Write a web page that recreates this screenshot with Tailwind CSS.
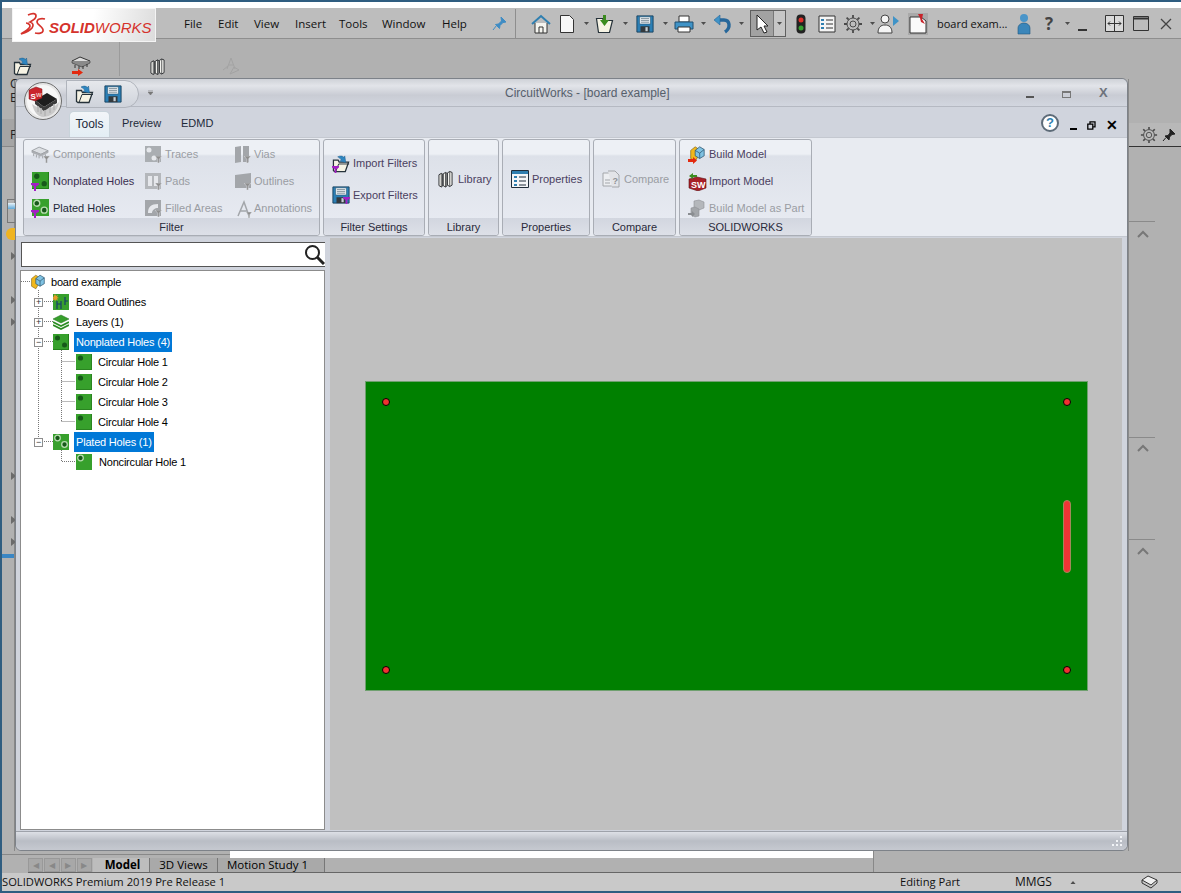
<!DOCTYPE html>
<html lang="en">
<head>
  <meta charset="UTF-8">
  <script src="https://cdn.jsdelivr.net/npm/@tailwindcss/browser@4"></script>
  <title>CircuitWorks - SOLIDWORKS</title>
</head>
<body class="bg-[#b1b1b1] font-['Open_Sans',sans-serif] text-black overflow-hidden">

  <!-- shared icons -->
  <svg class="hidden">
    <defs>
      <symbol id="open" viewBox="0 0 20 20">
        <path d="M1.500 6.500h5l1 2h7l-1 0 4 0-3.500 10h-11l-1.500-1z" fill="#f6f3e4" stroke="#26323a" stroke-width="1.300"/>
        <path d="M4 18.500l3-8h11" fill="none" stroke="#26323a" stroke-width="1"/>
        <path d="M6 3c3-1.500 5-1 6.500.5l1-1.500 1 7-6.500-1.500 1.800-1c-.8-1.500-2-2.500-3.800-3.500z" fill="#2f86c0" stroke="#1d5c88" stroke-width=".5"/>
      </symbol>
      <symbol id="save" viewBox="0 0 20 20">
        <path d="M1 1h18v18H1z" fill="#2b7fb5" stroke="#16405c"/>
        <path d="M4 2h12v8H4z" fill="#eef3f6" stroke="#26506c" stroke-width=".6"/>
        <path d="M5.500 4h9M5.500 6h9M5.500 8h9" stroke="#5a6e7a" stroke-width=".8"/>
        <path d="M5 12.500h10V19H5z" fill="#33393d"/>
        <path d="M10.500 13.500h2.500v4.500h-2.500z" fill="#c4ced4"/>
      </symbol>
      <symbol id="funnel" viewBox="0 0 8 8">
        <path d="M0 0h8v1.800L5 3.500V8H3V3.500L0 1.800z" fill="#a21fc4"/>
      </symbol>
      <symbol id="gfunnel" viewBox="0 0 8 8">
        <path d="M0 0h8L5 3.500V8H3V3.500z" fill="#8e8e8e" stroke="#e8ebf2" stroke-width=".5"/>
      </symbol>
      <symbol id="holes" viewBox="0 0 16 16">
        <rect width="16" height="16" fill="#37a02c"/>
        <path d="M0 15.500h16M15.500 0v16" stroke="#238019"/>
        <circle cx="4.500" cy="4" r="2.500" fill="#17591a"/>
        <circle cx="11.500" cy="11" r="2.500" fill="#17591a"/>
      </symbol>
      <symbol id="plated" viewBox="0 0 16 16">
        <rect width="16" height="16" fill="#37a02c"/>
        <circle cx="4.500" cy="4" r="2.800" fill="#17591a" stroke="#b6dcae" stroke-width="1.300"/>
        <circle cx="11.500" cy="10.500" r="2.800" fill="#17591a" stroke="#b6dcae" stroke-width="1.300"/>
      </symbol>
      <symbol id="hole" viewBox="0 0 16 16">
        <rect width="16" height="16" fill="#37a02c"/>
        <path d="M0 15.500h16M15.500 0v16" stroke="#2a8420"/>
        <circle cx="4.500" cy="4" r="2.600" fill="#17591a"/>
      </symbol>
      <symbol id="phole" viewBox="0 0 16 16">
        <rect width="16" height="16" fill="#37a02c"/>
        <circle cx="4.500" cy="4" r="2.800" fill="#17591a" stroke="#b6dcae" stroke-width="1.300"/>
      </symbol>
      <symbol id="chipg" viewBox="0 0 20 16">
        <path d="M1 6l8-4 10 4-8 4z" fill="#dcdfe3" stroke="#9a9da2"/>
        <path d="M1 6v2l10 4 8-4V6l-8 4z" fill="#aeb1b5" stroke="#9a9da2" stroke-width=".6"/>
        <path d="M3 9v3M6 10.500v3M9 11.500v3M13 11.500v3M16 10v3" stroke="#9a9da2"/>
      </symbol>
      <symbol id="book" viewBox="0 0 16 18">
        <path d="M1 4.500l2.500-1.500 1.500.8V16.500l-1.500 1L1 16zM5.500 3.500L8 2l1.500.8v13.700l-1.500 1-2.500-1.500zM10 2.500L12.500 1l2.500 1V15.500l-2.500 1.500L10 15.500z" fill="#f2f2ee" stroke="#2b2d30" stroke-width="1"/>
        <path d="M3.500 3v14.500M8 2v15.500M12.500 1v16" stroke="#2b2d30" stroke-width=".8"/>
      </symbol>
      <symbol id="gear" viewBox="0 0 20 20">
        <circle cx="10" cy="10" r="6" fill="none" stroke="#4a4a4a" stroke-width="1"/>
        <circle cx="10" cy="10" r="3" fill="none" stroke="#4a4a4a" stroke-width="1"/>
        <path d="M10 1v3M10 16v3M1 10h3M16 10h3M3.600 3.600l2.100 2.100M14.300 14.300l2.100 2.100M3.600 16.400l2.100-2.100M14.300 5.700l2.100-2.100" stroke="#4a4a4a" stroke-width="1.800"/>
      </symbol>
      <symbol id="cube" viewBox="0 0 20 20">
        <path d="M3 6l5-4 3 2v9l-3 5-5-3z" fill="#f1b81c" stroke="#7d5f10" stroke-width=".7"/>
        <path d="M8 6l5-4 5 3v7l-5 3-5-3z" fill="#7fc2e2" stroke="#28506a" stroke-width=".8"/>
        <path d="M8 6l5 3 5-4M13 9v6" fill="none" stroke="#28506a" stroke-width=".8"/>
      </symbol>
      <symbol id="caret" viewBox="0 0 5 3">
        <path d="M0 0h5L2.500 3z" fill="#4d4d4d"/>
      </symbol>
      <symbol id="chevron" viewBox="0 0 12 8">
        <path d="M1 7l5-5 5 5" fill="none" stroke="#777" stroke-width="2"/>
      </symbol>
      <symbol id="tri" viewBox="0 0 5 8">
        <path d="M0 0l5 4-5 4z" fill="#6b6b6b"/>
      </symbol>
    </defs>
  </svg>

  <div class="relative w-[1181px] h-[893px] flex flex-col border-l-2 border-t-2 border-[#2f5d80]">

    <!-- SOLIDWORKS menu bar -->
    <div class="h-[6px] bg-white"></div>
    <div class="h-[31px] bg-[#bdbdbd] border-b border-[#8e8e8e] flex items-center pt-[1px] text-[11.5px] leading-none text-[#111]">
      <div class="ml-[10px] w-[144px] h-[34px] -mt-[1px] self-start bg-[linear-gradient(100deg,#ffffff_55%,#dcdcdc)] border border-[#f4f4f4] flex items-center relative z-10">
        <svg class="ml-[6px] w-[28px] h-[27px]" viewBox="0 0 26 27"><path d="M8 3c5-2.500 8-1.500 8 1 0 3-4 5-6 6 3 1 4 3 2 6-2 2.500-6 4.500-11 6 4-3 9-5 9-8 0-2-3-3-4-3M25 7c-4-1-8 0-8 3 0 3 7 5 6 9-.5 2-4 3-8 2" fill="none" stroke="#d5332c" stroke-width="1.700"/></svg>
        <span class="ml-[2px] mt-[5px] text-[15px] italic font-['Liberation_Sans',sans-serif] text-[#d5332c]"><b>SOLID</b>WORKS</span>
      </div>
      <div class="ml-[28px] flex pt-[1px]">
        <span class="w-[34px]">File</span>
        <span class="w-[36px]">Edit</span>
        <span class="w-[41px]">View</span>
        <span class="w-[44px]">Insert</span>
        <span class="w-[43px]">Tools</span>
        <span class="w-[60px]">Window</span>
        <span class="w-[50px]">Help</span>
      </div>
      <svg class="w-[15px] h-[15px]" viewBox="0 0 15 15"><path d="M9 1l5 5-3 .5-3 3-.5 3L3.500 8.500l3-.5 3-3zM4.500 9.500L1 14" fill="#3e8cc4" stroke="#3e8cc4"/></svg>
      <div class="ml-[8px] w-[1px] h-[30px] bg-[#8e8e8e]"></div>
      <div class="ml-[15px] flex items-center">
        <svg class="w-[20px] h-[20px]" viewBox="0 0 20 20"><path d="M1 10l9-8 9 8" fill="none" stroke="#2f7fb0" stroke-width="2"/><path d="M4 9v10h12V9" fill="#f4f4ef" stroke="#333"/><path d="M8 19v-6h4v6" fill="none" stroke="#333"/></svg>
        <svg class="ml-[8px] w-[16px] h-[20px]" viewBox="0 0 16 20"><path d="M1.500 1.500h9l4 4v13h-13z" fill="#f7f7f7" stroke="#333"/></svg>
        <svg class="ml-[9px] w-[5px] h-[3px]"><use href="#caret"/></svg>
        <svg class="ml-[6px] w-[20px] h-[20px]" viewBox="0 0 20 20"><path d="M1.500 4.500h6l1 2h9l-3 12h-11z" fill="#f6f3e4" stroke="#26323a" stroke-width="1.200"/><path d="M8 1h3v5h3l-4.500 6L5 6h3z" fill="#3b8b1f"/></svg>
        <svg class="ml-[8px] w-[5px] h-[3px]"><use href="#caret"/></svg>
        <svg class="ml-[8px] w-[18px] h-[20px]"><use href="#save"/></svg>
        <svg class="ml-[9px] w-[5px] h-[3px]"><use href="#caret"/></svg>
        <svg class="ml-[6px] w-[20px] h-[18px]" viewBox="0 0 20 18"><path d="M5 1h10v6H5z" fill="#fff" stroke="#333"/><path d="M1 7h18v7H1z" fill="#3f93c7" stroke="#1f4f70"/><path d="M4 12h12v5H4z" fill="#fff" stroke="#333"/></svg>
        <svg class="ml-[7px] w-[5px] h-[3px]"><use href="#caret"/></svg>
        <svg class="ml-[7px] w-[20px] h-[20px]" viewBox="0 0 20 20"><path d="M5 6h6c6 0 7 8 1 12" fill="none" stroke="#27679a" stroke-width="3.400"/><path d="M1 6l6-5v10z" fill="#3f93c7" stroke="#27679a" stroke-width=".6"/></svg>
        <svg class="ml-[6px] w-[5px] h-[3px]"><use href="#caret"/></svg>
        <div class="ml-[6px] h-[27px] w-[36px] flex border border-[#5f5f5f] bg-[#a2a2a2]">
          <div class="w-[22px] flex items-center justify-center">
            <svg class="w-[13px] h-[20px]" viewBox="0 0 13 20"><path d="M1 1v15l4-3 3 6 3-1-3-6h4z" fill="#fff" stroke="#222"/></svg>
          </div>
          <div class="flex-1 bg-[#c6c6c6] border-l border-[#777] flex items-center justify-center">
            <svg class="w-[5px] h-[3px]"><use href="#caret"/></svg>
          </div>
        </div>
        <svg class="ml-[10px] w-[10px] h-[20px]" viewBox="0 0 10 20"><rect x=".5" y=".5" width="9" height="19" rx="4" fill="#222"/><circle cx="5" cy="6" r="2.500" fill="#e0302a"/><circle cx="5" cy="14" r="2.500" fill="#36a030"/></svg>
        <svg class="ml-[12px] w-[18px] h-[18px]" viewBox="0 0 18 18"><path d="M1 1h16v16H1z" fill="#f5f5f5" stroke="#333"/><path d="M3 4h3v2H3zM3 8h3v2H3zM3 12h3v2H3z" fill="#2f7fb0"/><path d="M8 5h7M8 9h7M8 13h7" stroke="#333"/></svg>
        <svg class="ml-[7px] w-[20px] h-[20px]"><use href="#gear"/></svg>
        <svg class="ml-[7px] w-[5px] h-[3px]"><use href="#caret"/></svg>
        <svg class="ml-[2px] w-[23px] h-[20px]" viewBox="0 0 23 20"><circle cx="8" cy="5" r="4" fill="#f4f4f4" stroke="#444"/><path d="M1 19c0-6 3-8 7-8s7 2 7 8z" fill="#f4f4f4" stroke="#444"/><path d="M16 2l6 5-6 5z" fill="#3f93c7"/></svg>
        <div class="ml-[8px] w-[20px] h-[22px] bg-[#a9a9a9] flex items-center justify-center">
          <svg class="w-[18px] h-[20px]" viewBox="0 0 18 20"><path d="M1 3h11l5 4v12H1z" fill="#fafafa" stroke="#333"/><path d="M9 0h5l-1 5 3 5-4-2-1-4z" fill="#c8232a"/></svg>
        </div>
        <span class="ml-[9px] w-[80px] text-[11px] whitespace-nowrap">board exam...</span>
        <svg class="w-[14px] h-[22px]" viewBox="0 0 14 22"><circle cx="7" cy="5" r="4" fill="#4a95c9"/><path d="M1 21v-6c0-3 3-5 6-5s6 2 6 5v6z" fill="#3b86ba" stroke="#24597f" stroke-width=".6"/></svg>
        <span class="ml-[11px] w-[14px] text-[17px] font-bold text-[#444] text-center">?</span>
        <svg class="ml-[9px] w-[5px] h-[3px]"><use href="#caret"/></svg>
        <svg class="ml-[6px] w-[16px] h-[18px]" viewBox="0 0 16 18"><path d="M2 15h9" stroke="#333" stroke-width="2"/></svg>
        <svg class="ml-[13px] w-[19px] h-[17px]" viewBox="0 0 19 17"><path d="M.5.500h18v16H.5zM9.500 1v15" fill="#dadada" stroke="#333"/><path d="M3 8.500h13M5 6.500l-2 2 2 2M14 6.500l2 2-2 2" fill="none" stroke="#333"/></svg>
        <svg class="ml-[9px] w-[16px] h-[15px]" viewBox="0 0 16 15"><path d="M.5.500h15v14H.5z" fill="none" stroke="#333"/><path d="M1 2.500h14" stroke="#333" stroke-width="2"/></svg>
        <svg class="ml-[11px] w-[12px] h-[12px]" viewBox="0 0 12 12"><path d="M1 1l10 10M11 1L1 11" stroke="#444" stroke-width="1.300"/></svg>
      </div>
    </div>

    <!-- command manager, mostly behind the floating window -->
    <div class="h-[40px] flex items-end pb-[3px] relative">
      <svg class="ml-[11px] w-[20px] h-[20px]"><use href="#open"/></svg>
      <svg class="ml-[38px] w-[20px] h-[20px]" viewBox="0 0 20 20"><path d="M1 5l8-4 10 4-8 4z" fill="#dcdcdc" stroke="#333"/><path d="M1 5v2l10 4 8-4V5" fill="#8a8a8a" stroke="#333" stroke-width=".6"/><path d="M4 9v3M8 10v3M12 10v3M16 8v3" stroke="#333"/><path d="M1 15h6v-2l5 3.500L7 20v-2H1z" fill="#e2290f"/></svg>
      <div class="ml-[28px] w-[1px] h-[34px] bg-[#9b9b9b]"></div>
      <svg class="ml-[30px] w-[15px] h-[19px]"><use href="#book"/></svg>
      <svg class="ml-[56px] w-[20px] h-[20px]" viewBox="0 0 20 20"><path d="M6 13L10 2l4 11M8 9h4M2 14l5-4M18 14l-5-3-4 7z" fill="none" stroke="#a3a3a3"/></svg>
    </div>

    <!-- main area: left feature tree strip, space, right task pane strip -->
    <div class="flex-1 flex">
      <div class="w-[13px] bg-[#b1b1b1] border-r border-[#888] text-[12px] leading-none text-[#222] relative">
        <span class="absolute left-[8px] top-[-1px]">C</span>
        <span class="absolute left-[8px] top-[13px]">E</span>
        <div class="absolute left-0 right-0 top-[40px] h-[28px] bg-[#a5a5a5] border-b border-[#888] pl-[8px] pt-[10px]">F</div>
        <div class="absolute left-[5px] top-[120px] w-[10px] h-[24px] border border-[#777]">
          <div class="mt-[3px] h-[6px] bg-[linear-gradient(#e8f2f8,#5fa8d8)]"></div>
        </div>
        <div class="absolute left-[4px] top-[149px] w-[10px] h-[12px] bg-[#f0b420] rounded-l-full"></div>
        <svg class="absolute left-[9px] top-[173px] w-[5px] h-[8px]"><use href="#tri"/></svg>
        <svg class="absolute left-[9px] top-[217px] w-[5px] h-[8px]"><use href="#tri"/></svg>
        <svg class="absolute left-[9px] top-[239px] w-[5px] h-[8px]"><use href="#tri"/></svg>
        <svg class="absolute left-[9px] top-[393px] w-[5px] h-[8px]"><use href="#tri"/></svg>
        <svg class="absolute left-[9px] top-[437px] w-[5px] h-[8px]"><use href="#tri"/></svg>
        <svg class="absolute left-[9px] top-[459px] w-[5px] h-[8px]"><use href="#tri"/></svg>
        <div class="absolute left-0 right-0 top-[475px] h-[4px] bg-[#3a86c4]"></div>
      </div>
      <div class="flex-1"></div>
      <div class="w-[53px] border-l border-[#8a8a8a] relative">
        <div class="mt-[44px] h-[24px] bg-[#b8b8b8] border-b border-[#333] flex items-center gap-[4px] pl-[11px]">
          <svg class="w-[18px] h-[18px]"><use href="#gear"/></svg>
          <svg class="w-[14px] h-[14px]" viewBox="0 0 14 14"><path d="M8 1l5 5-3 .5-2.500 2.500-.5 3L3 8l3-.5L8 5zM4 9.500L1 13" fill="#222" stroke="#222"/></svg>
        </div>
        <div class="mt-[74px] w-[26px] border-t border-[#8a8a8a]"></div>
        <svg class="mt-[8px] ml-[8px] w-[12px] h-[8px]"><use href="#chevron"/></svg>
        <div class="mt-[199px] w-[26px] border-t border-[#8a8a8a]"></div>
        <svg class="mt-[6px] ml-[8px] w-[12px] h-[8px]"><use href="#chevron"/></svg>
        <div class="mt-[87px] w-[26px] border-t border-[#8a8a8a]"></div>
        <svg class="mt-[7px] ml-[8px] w-[12px] h-[8px]"><use href="#chevron"/></svg>
      </div>
    </div>

    <!-- sheet tabs -->
    <div class="h-[22px] flex items-stretch text-[11.5px] leading-none relative">
      <div class="w-[228px] mt-[3px] border-t border-[#888]"></div>
      <div class="w-[643px] h-[7px] bg-white"></div>
      <div class="flex-1 border-l border-[#888]"></div>
      <div class="absolute left-[26px] right-0 top-[7px] h-[15px] flex items-stretch border-b border-[#666]">
        <div class="w-[64px] flex gap-[1px] items-stretch">
          <div class="flex-1 bg-[#a8a8a8] border border-[#999] text-[#888] text-center text-[8px] pt-[2px]">&#9664;</div>
          <div class="flex-1 bg-[#a8a8a8] border border-[#999] text-[#888] text-center text-[8px] pt-[2px]">&#9664;</div>
          <div class="flex-1 bg-[#a8a8a8] border border-[#999] text-[#888] text-center text-[8px] pt-[2px]">&#9654;</div>
          <div class="flex-1 bg-[#a8a8a8] border border-[#999] text-[#888] text-center text-[8px] pt-[2px]">&#9654;</div>
        </div>
        <div class="ml-[1px] w-[57px] pl-[3px] bg-[#bdbdbd] font-bold flex items-center justify-center border-r border-[#777]">Model</div>
        <div class="w-[68px] bg-[#a9a9a9] flex items-center justify-center border-r border-[#777]">3D Views</div>
        <div class="w-[107px] pr-[7px] bg-[#a9a9a9] flex items-center justify-center border-r border-[#777]">Motion Study 1</div>
      </div>
    </div>

    <!-- status bar -->
    <div class="h-[20px] bg-[#c9c9c9] flex items-center text-[11.2px] leading-none text-[#111] border-b-2 border-[#2f5d80]">
      <span class="w-[898px]">SOLIDWORKS Premium 2019 Pre Release 1</span>
      <span class="w-[115px]">Editing Part</span>
      <span class="w-[55px] text-[12px]">MMGS</span>
      <svg class="w-[6px] h-[3px] rotate-180"><use href="#caret"/></svg>
      <svg class="ml-[65px] w-[17px] h-[14px]" viewBox="0 0 17 14"><path d="M1 5l6-4 9 4-6 5z" fill="#f0f0f0" stroke="#333"/><path d="M1 5v3l9 5 6-5V5" fill="none" stroke="#333"/></svg>
    </div>

    <!-- CircuitWorks floating window -->
    <div class="absolute left-[13px] top-[76px] w-[1113px] h-[773px] flex flex-col rounded-t-[6px] rounded-b-[6px] border border-[#7d8289] bg-[#d0d4dd] text-[11px] leading-none text-[#1e2a3a] font-['Liberation_Sans',sans-serif]">

      <!-- title bar -->
      <div class="h-[28px] flex items-center border-b border-[#b5b9c2] rounded-t-[6px] bg-[linear-gradient(#cfd2d8,#e2e4e9_25%,#c9ccd4_60%,#d2d6df)] relative">
        <!-- application orb -->
        <svg class="absolute left-[8px] top-[3px] w-[38px] h-[38px] z-10" viewBox="0 0 38 38">
          <circle cx="19" cy="19" r="18.500" fill="#e6e6e6" stroke="#6d6d6d"/>
          <circle cx="19" cy="19" r="16" fill="#f7f7f7"/>
          <path d="M8 22c8 6 20 7 27-2-1 9-8 15-16 15-5 0-9-5-11-13z" fill="#c9c9c9"/>
          <path d="M11 18l12-7 10 6-13 8z" fill="#1d1d1d"/>
          <path d="M11 18v4l9 7 13-8v-4l-13 8z" fill="#3a3a3a"/>
          <path d="M14 24v6M17 26v6M21 28v6M26 25v6M30 22v6" stroke="#b5b5b5" stroke-width="1.600"/>
          <path d="M5 8l7-3 6 2v9l-7 3-6-2z" fill="#c9252c" stroke="#7a1419" stroke-width=".5"/>
          <text x="6.500" y="16.500" font-size="8" font-weight="bold" fill="#fff" font-family="Liberation Sans">S</text>
          <text x="12" y="14.500" font-size="6" font-weight="bold" fill="#f2c4c4" font-family="Liberation Sans">W</text>
        </svg>
        <div class="ml-[50px] w-[73px] h-[28px] mt-[3px] rounded-r-[14px] border border-[#b0b4bc] bg-[linear-gradient(#e6e8ec,#cfd3db)] flex items-center">
          <svg class="ml-[8px] w-[20px] h-[20px]"><use href="#open"/></svg>
          <svg class="ml-[9px] w-[18px] h-[18px]"><use href="#save"/></svg>
        </div>
        <svg class="ml-[9px] w-[5px] h-[5px]" viewBox="0 0 5 5"><path d="M0 0h5M0 2h5l-2.500 3z" stroke="#777" stroke-width=".6" fill="#777"/></svg>
        <span class="ml-[352px] w-[163px] whitespace-nowrap text-center text-[#56606c] text-[12px]">CircuitWorks - [board example]</span>
        <div class="ml-[358px] w-[8px] h-[2px] mt-[8px] bg-[#555]"></div>
        <div class="ml-[28px] w-[9px] h-[7px] mt-[4px] border border-[#777] border-t-2"></div>
        <span class="ml-[28px] text-[13px] font-bold text-[#6d737c]">X</span>
      </div>

      <!-- tabs row -->
      <div class="h-[30px] flex items-end relative">
        <div class="ml-[53px] w-[41px] h-[26px] pb-[2px] rounded-t-[5px] bg-[linear-gradient(#f2f5f8,#e3eef4)] border border-b-0 border-[#c8d3da] flex items-center justify-center text-[12px]">Tools</div>
        <span class="ml-[12px] w-[59px] h-[26px] pb-[2px] flex items-center">Preview</span>
        <span class="h-[26px] pb-[2px] flex items-center">EDMD</span>
        <div class="ml-auto mr-[9px] h-[26px] flex items-center text-black">
          <div class="w-[18px] h-[18px] mb-[3px] rounded-full border-2 border-[#5d6b78] bg-white text-[#2f7fb0] font-bold text-[13px] flex items-center justify-center">?</div>
          <div class="ml-[11px] mt-[9px] w-[7px] h-[2px] bg-black"></div>
          <svg class="ml-[10px] w-[9px] h-[9px] mt-[3px]" viewBox="0 0 9 9"><path d="M3 2.500V.8h5v5H6.500M.8 3.200h5v5h-5z" fill="none" stroke="#000" stroke-width="1.300"/></svg>
          <span class="ml-[10px] text-[14px] font-bold mt-[2px]">&#10005;</span>
        </div>
      </div>

      <!-- ribbon -->
      <div class="h-[100px] bg-[#e8ebf1] border-y border-[#c4c8d0] flex gap-[3px] pl-[7px] pt-[1px] text-[#4a4060] whitespace-nowrap">

        <div class="w-[297px] h-[97px] flex flex-col rounded-[3px] border border-[#a9adb5] bg-[linear-gradient(#edf0f5_0,#edf0f5_14px,#dde1e9_16px,#e9ecf3_100%)]">
          <div class="h-[78px] shrink-0 grid grid-cols-[113px_90px_auto] grid-rows-[27px_27px_27px] pl-[7px] pt-[1px] items-center">
            <div class="flex items-center gap-[2px] text-[#9a9da3]"><svg class="w-[20px] h-[20px]" viewBox="0 0 20 20"><use href="#chipg" width="18" height="15"/><use href="#gfunnel" x="12" y="11" width="7" height="7"/></svg>Components</div>
            <div class="flex items-center gap-[2px] text-[#9a9da3]"><svg class="w-[19px] h-[19px]" viewBox="0 0 19 19"><path d="M1 1h16v16H1z" fill="#aaaeb2"/><circle cx="5" cy="5" r="2.500" fill="#e6e8ec"/><circle cx="10" cy="13" r="2.500" fill="#e6e8ec"/><use href="#gfunnel" x="11" y="11" width="7" height="7"/></svg>Traces</div>
            <div class="flex items-center gap-[2px] text-[#9a9da3]"><svg class="w-[18px] h-[19px]" viewBox="0 0 18 19"><path d="M1 2l6-1v16l-6 1zM9 1h6v16H9z" fill="#a3a6aa"/><use href="#gfunnel" x="10" y="11" width="7" height="7"/></svg>Vias</div>

            <div class="flex items-center gap-[4px] text-[#3a3050]"><svg class="w-[18px] h-[19px]" viewBox="0 0 18 19"><use href="#holes" x="1" width="17" height="17"/><use href="#funnel" y="11" width="8" height="8"/></svg>Nonplated Holes</div>
            <div class="flex items-center gap-[2px] text-[#9a9da3]"><svg class="w-[19px] h-[19px]" viewBox="0 0 19 19"><path d="M1 1h16v16H1z" fill="#b4b7bb"/><path d="M4 4h4v10H4zM10 4h4v10h-4z" fill="#e6e8ec"/><use href="#gfunnel" x="11" y="11" width="7" height="7"/></svg>Pads</div>
            <div class="flex items-center gap-[2px] text-[#9a9da3]"><svg class="w-[18px] h-[19px]" viewBox="0 0 18 19"><path d="M1 3l16-2v15H1z" fill="#a3a6aa"/><use href="#gfunnel" x="10" y="11" width="7" height="7"/></svg>Outlines</div>

            <div class="flex items-center gap-[4px] text-[#1e2a3a]"><svg class="w-[18px] h-[19px]" viewBox="0 0 18 19"><use href="#plated" x="1" width="17" height="17"/><use href="#funnel" y="11" width="8" height="8"/></svg>Plated Holes</div>
            <div class="flex items-center gap-[2px] text-[#9a9da3]"><svg class="w-[19px] h-[19px]" viewBox="0 0 19 19"><path d="M1 1h16v16H1z" fill="#a3a6aa"/><path d="M4 14c0-6 3-9 10-9v4c-3 0-6 2-6 5z" fill="#e6e8ec"/><use href="#gfunnel" x="11" y="11" width="7" height="7"/></svg>Filled Areas</div>
            <div class="ml-[3px] flex items-center gap-[2px] text-[#9a9da3]"><svg class="w-[15px] h-[18px]" viewBox="0 0 15 18"><path d="M1 16L7 2l5 14M3.500 11h6" fill="none" stroke="#a3a6aa" stroke-width="1.500"/><use href="#gfunnel" x="9" y="12" width="6" height="6"/></svg>Annotations</div>
          </div>
          <div class="h-[17px] pt-[1px] bg-[linear-gradient(#d2d6df,#dde0e8)] flex items-center justify-center rounded-b-[3px] text-[#2a2a3a]">Filter</div>
        </div>

        <div class="w-[102px] h-[97px] flex flex-col rounded-[3px] border border-[#a9adb5] bg-[linear-gradient(#edf0f5_0,#edf0f5_14px,#dde1e9_16px,#e9ecf3_100%)]">
          <div class="h-[78px] flex flex-col pl-[8px] pt-[13px] gap-[12px]">
            <div class="flex items-center gap-[2px] h-[20px]"><svg class="w-[19px] h-[19px]" viewBox="0 0 19 19"><use href="#open" width="19" height="19"/><use href="#funnel" y="12" width="7" height="7"/></svg>Import Filters</div>
            <div class="flex items-center gap-[3px] h-[20px]"><svg class="w-[18px] h-[19px]" viewBox="0 0 18 19"><use href="#save" width="18" height="18"/><use href="#funnel" x="11" y="11" width="7" height="7"/></svg>Export Filters</div>
          </div>
          <div class="h-[17px] pt-[1px] bg-[linear-gradient(#d2d6df,#dde0e8)] flex items-center justify-center rounded-b-[3px] text-[#2a2a3a]">Filter Settings</div>
        </div>

        <div class="w-[71px] h-[97px] flex flex-col rounded-[3px] border border-[#a9adb5] bg-[linear-gradient(#edf0f5_0,#edf0f5_14px,#dde1e9_16px,#e9ecf3_100%)]">
          <div class="h-[78px] flex items-center pl-[9px] gap-[5px]"><svg class="w-[15px] h-[18px]"><use href="#book"/></svg>Library</div>
          <div class="h-[17px] pt-[1px] bg-[linear-gradient(#d2d6df,#dde0e8)] flex items-center justify-center rounded-b-[3px] text-[#2a2a3a]">Library</div>
        </div>

        <div class="w-[88px] h-[97px] flex flex-col rounded-[3px] border border-[#a9adb5] bg-[linear-gradient(#edf0f5_0,#edf0f5_14px,#dde1e9_16px,#e9ecf3_100%)]">
          <div class="h-[78px] flex items-center pl-[8px] gap-[3px]"><svg class="w-[18px] h-[18px]" viewBox="0 0 18 18"><path d="M.5.500h17v17H.5z" fill="#f4f6f8" stroke="#1f2d3a"/><path d="M1 1h16v3H1z" fill="#2f7fb0"/><path d="M3 6h3v2H3zM3 10h3v2H3zM3 14h3v2H3z" fill="#2f7fb0"/><path d="M8 7h7M8 11h7M8 15h7" stroke="#1f2d3a"/></svg>Properties</div>
          <div class="h-[17px] pt-[1px] bg-[linear-gradient(#d2d6df,#dde0e8)] flex items-center justify-center rounded-b-[3px] text-[#2a2a3a]">Properties</div>
        </div>

        <div class="w-[83px] h-[97px] flex flex-col rounded-[3px] border border-[#a9adb5] bg-[linear-gradient(#edf0f5_0,#edf0f5_14px,#dde1e9_16px,#e9ecf3_100%)]">
          <div class="h-[78px] flex items-center pl-[8px] gap-[3px] text-[#9a9da3]"><svg class="w-[19px] h-[19px]" viewBox="0 0 19 19"><path d="M1 3h8l3 3v10H1z" fill="#eceef1" stroke="#a3a6aa"/><path d="M6 1h7l4 4v12H10" fill="#e2e4e8" stroke="#a3a6aa"/><path d="M3 10h5M3 13h5" stroke="#a3a6aa"/><text x="10.500" y="14" font-size="9" font-weight="bold" fill="#8e9195" font-family="Liberation Sans">?</text></svg>Compare</div>
          <div class="h-[17px] pt-[1px] bg-[linear-gradient(#d2d6df,#dde0e8)] flex items-center justify-center rounded-b-[3px] text-[#2a2a3a]">Compare</div>
        </div>

        <div class="w-[133px] h-[97px] flex flex-col rounded-[3px] border border-[#a9adb5] bg-[linear-gradient(#edf0f5_0,#edf0f5_14px,#dde1e9_16px,#e9ecf3_100%)]">
          <div class="h-[78px] shrink-0 grid grid-rows-[27px_27px_27px] pl-[8px] pt-[1px] items-center">
            <div class="flex items-center gap-[2px]"><svg class="w-[19px] h-[19px]" viewBox="0 0 19 19"><use href="#cube" width="18" height="18"/><path d="M0 14h5v-2l4 3.500L5 19v-2H0z" fill="#e2290f"/></svg>Build Model</div>
            <div class="flex items-center gap-[2px]"><svg class="w-[19px] h-[19px]" viewBox="0 0 19 19"><path d="M1 7l8-2 9 2v9l-8 3-9-3z" fill="#a81f26" stroke="#5d1015" stroke-width=".6"/><text x="3" y="16" font-size="9" font-weight="bold" fill="#fff" font-family="Liberation Sans">SW</text><path d="M9 3H5V1L1 4l4 3V5h4z" fill="#3b8b1f"/></svg>Import Model</div>
            <div class="flex items-center gap-[2px] text-[#9a9da3]"><svg class="w-[19px] h-[19px]" viewBox="0 0 19 19"><path d="M6 2l5-1 5 2v6l-5 2-5-2z" fill="#b4b7bb" stroke="#8e9195" stroke-width=".6"/><path d="M3 9l4-1 4 2v7l-4 1-4-2z" fill="#a3a6aa" stroke="#8e9195" stroke-width=".6"/><path d="M0 14h4v-2l3 3-3 3v-2H0z" fill="#8a8d91"/></svg>Build Model as Part</div>
          </div>
          <div class="h-[17px] pt-[1px] bg-[linear-gradient(#d2d6df,#dde0e8)] flex items-center justify-center rounded-b-[3px] text-[#2a2a3a]">SOLIDWORKS</div>
        </div>
      </div>

      <!-- body -->
      <div class="flex-1 flex min-h-0 bg-[#d0d4dd]">
        <div class="ml-[4px] w-[306px] flex flex-col pr-[1px]">
          <div class="ml-[1px] h-[25px] mt-[5px] border border-[#555] border-r-0 bg-white flex items-center justify-end">
            <svg class="w-[21px] h-[21px]" viewBox="0 0 21 21"><circle cx="8.500" cy="8.500" r="6.500" fill="none" stroke="#222" stroke-width="2"/><path d="M13 13l7 7" stroke="#222" stroke-width="3"/></svg>
          </div>
          <!-- tree -->
          <div class="relative mt-[3px] flex-1 bg-white border border-[#8c8c8c] pt-[1px] text-black tracking-[-0.2px]">
            <svg class="absolute left-[-1px] top-[-1px] w-[100px] h-[210px]" viewBox="0 0 100 210" fill="none" stroke="#777" stroke-dasharray="1 1">
              <path d="M1 11.500h9M18.500 20v151M24 31.500h9M24 51.500h9M24 71.500h9M24 171.500h9M41.500 80v71.500M41.500 91.500h14M41.500 111.500h14M41.500 131.500h14M41.500 151.500h14M41.500 180v11.500h14"/>
            </svg>
            <div class="relative h-[20px] flex items-center pl-[8px]"><svg class="w-[17px] h-[18px]"><use href="#cube"/></svg><span class="ml-[5px]">board example</span></div>

            <div class="relative h-[20px] flex items-center pl-[13px]">
              <span class="w-[9px] h-[9px] border border-[#8d8d8d] bg-white text-[9px] leading-[7px] text-center text-[#333]">+</span>
              <svg class="ml-[10px] w-[16px] h-[16px]" viewBox="0 0 16 16"><rect width="16" height="16" fill="#37a02c"/><path d="M4 7v8M8 7v8M12 3v8M12 7h3M4 10h4" stroke="#173f6a" stroke-width="1.200"/><path d="M2 0l1 2 2-1-1 2 2 1-2 .5 1 2-2-1-1 2-.5-2-2 .5 1-2-2-1h2z" fill="#e89a2b"/></svg>
              <span class="ml-[7px]">Board Outlines</span>
            </div>
            <div class="relative h-[20px] flex items-center pl-[13px]">
              <span class="w-[9px] h-[9px] border border-[#8d8d8d] bg-white text-[9px] leading-[7px] text-center text-[#333]">+</span>
              <svg class="ml-[10px] w-[16px] h-[16px]" viewBox="0 0 16 16"><path d="M0 5l8-4 8 4-8 4z" fill="#37a02c" stroke="#1f6a18" stroke-width=".5"/><path d="M0 8l8 4 8-4M0 11l8 4 8-4" fill="none" stroke="#2b8c22" stroke-width="1.800"/></svg>
              <span class="ml-[7px]">Layers (1)</span>
            </div>
            <div class="relative h-[20px] flex items-center pl-[13px]">
              <span class="w-[9px] h-[9px] border border-[#8d8d8d] bg-white text-[9px] leading-[7px] text-center text-[#333]">&minus;</span>
              <svg class="ml-[10px] w-[16px] h-[16px]"><use href="#holes"/></svg>
              <span class="ml-[5px] h-[20px] px-[2px] flex items-center bg-[#0078d7] text-white">Nonplated Holes (4)</span>
            </div>
            <div class="relative h-[20px] flex items-center pl-[55px]"><svg class="w-[16px] h-[16px]"><use href="#hole"/></svg><span class="ml-[6px]">Circular Hole 1</span></div>
            <div class="relative h-[20px] flex items-center pl-[55px]"><svg class="w-[16px] h-[16px]"><use href="#hole"/></svg><span class="ml-[6px]">Circular Hole 2</span></div>
            <div class="relative h-[20px] flex items-center pl-[55px]"><svg class="w-[16px] h-[16px]"><use href="#hole"/></svg><span class="ml-[6px]">Circular Hole 3</span></div>
            <div class="relative h-[20px] flex items-center pl-[55px]"><svg class="w-[16px] h-[16px]"><use href="#hole"/></svg><span class="ml-[6px]">Circular Hole 4</span></div>
            <div class="relative h-[20px] flex items-center pl-[13px]">
              <span class="w-[9px] h-[9px] border border-[#8d8d8d] bg-white text-[9px] leading-[7px] text-center text-[#333]">&minus;</span>
              <svg class="ml-[10px] w-[16px] h-[16px]"><use href="#plated"/></svg>
              <span class="ml-[5px] h-[20px] px-[2px] flex items-center bg-[#0078d7] text-white">Plated Holes (1)</span>
            </div>
            <div class="relative h-[20px] flex items-center pl-[55px]"><svg class="w-[16px] h-[16px]"><use href="#phole"/></svg><span class="ml-[7px]">Noncircular Hole 1</span></div>
          </div>
          <div class="h-[1px]"></div>
        </div>

        <!-- board preview -->
        <div class="flex-1 ml-[4px] mr-[5px] mt-[1px] mb-[1px] bg-[#c0c0c0] flex items-center justify-center pt-[4px]">
          <div class="relative w-[723px] h-[310px] bg-[#008000] border border-[#6fa06f]">
            <span class="absolute left-[16px] top-[16px] w-[8px] h-[8px] rounded-full bg-[#f03030] border border-black"></span>
            <span class="absolute left-[697px] top-[16px] w-[8px] h-[8px] rounded-full bg-[#f03030] border border-black"></span>
            <span class="absolute left-[16px] top-[284px] w-[8px] h-[8px] rounded-full bg-[#f03030] border border-black"></span>
            <span class="absolute left-[697px] top-[284px] w-[8px] h-[8px] rounded-full bg-[#f03030] border border-black"></span>
            <span class="absolute left-[697px] top-[118px] w-[8px] h-[73px] rounded-full bg-[#ef3535] border border-[#a08a5a]"></span>
          </div>
        </div>
      </div>

      <!-- window bottom edge -->
      <div class="h-[19px] rounded-b-[6px] border-t border-[#9ea2aa] bg-[linear-gradient(#dde0e6,#b9bdc5_50%,#c6c9d0)] flex items-center justify-end pr-[4px]">
        <svg class="w-[11px] h-[11px]" viewBox="0 0 11 11" fill="#f2f4f7"><path d="M8 0h2v2H8zM4 4h2v2H4zM8 4h2v2H8zM0 8h2v2H0zM4 8h2v2H4zM8 8h2v2H8z"/></svg>
      </div>
    </div>
  </div>
</body>
</html>
